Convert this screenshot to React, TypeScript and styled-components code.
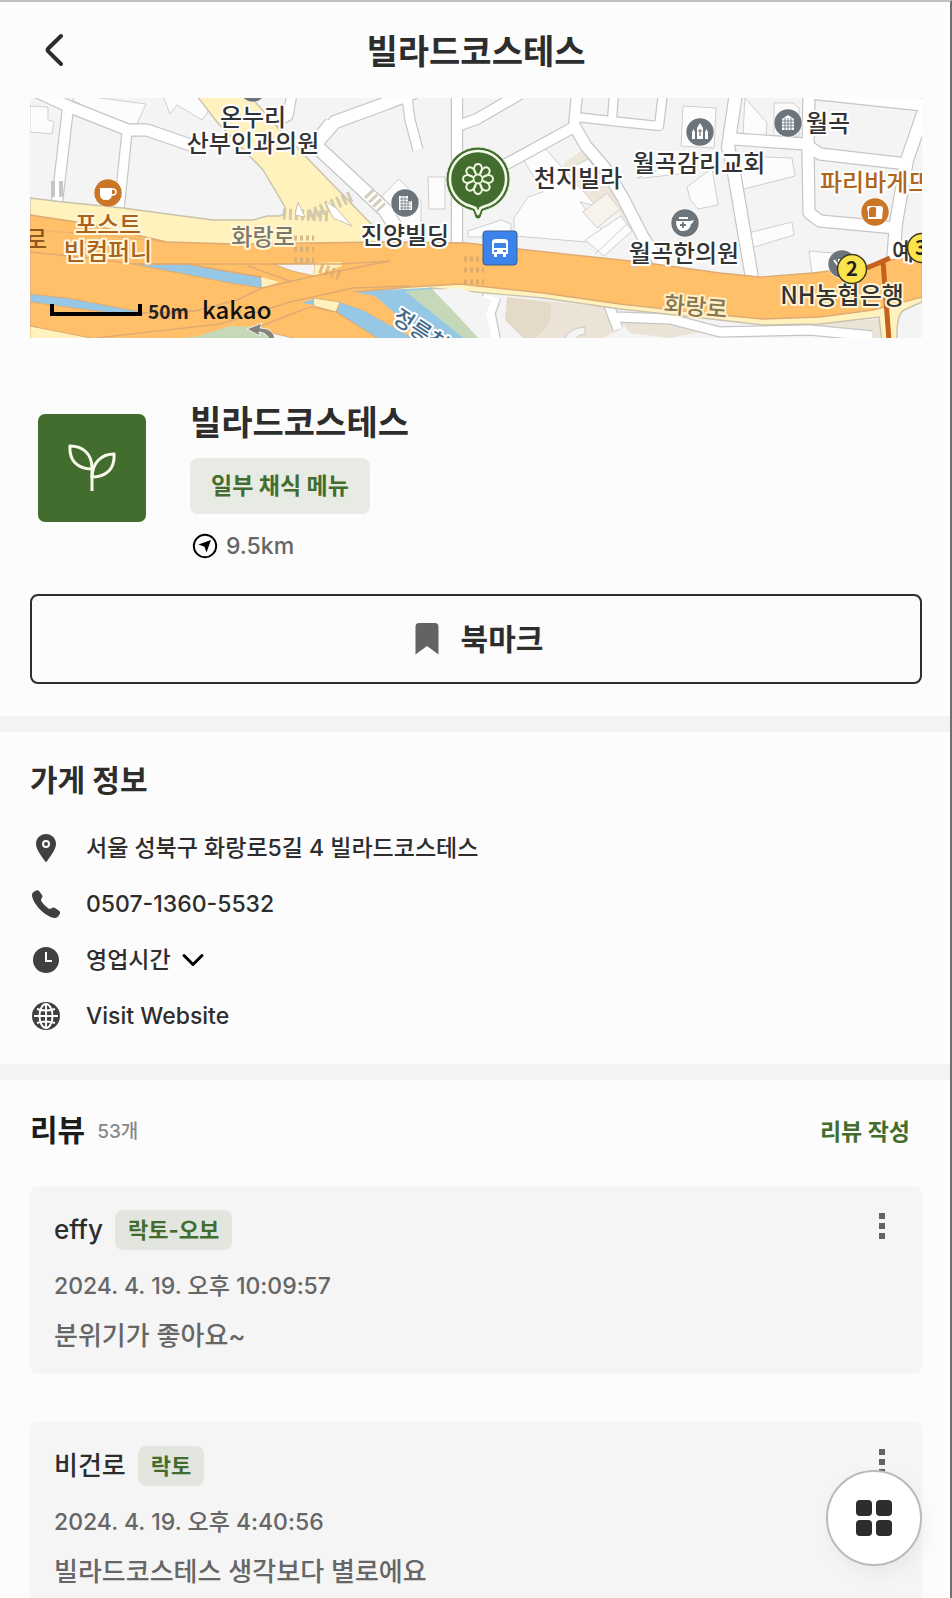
import React from "react";
import styled, { createGlobalStyle } from "styled-components";

const GlobalStyle = createGlobalStyle`
  *, *::before, *::after { box-sizing: border-box; }
  body {
    margin: 0;
    background: #fcfcfc;
    color: #2d2d2d;
    font-family: Inter, "Noto Sans CJK KR", sans-serif;
    font-weight: 500;
  }
  h1, h2, p, ul { margin: 0; padding: 0; }
  button { font: inherit; color: inherit; background: none; border: 0; padding: 0; cursor: pointer; }
  a { color: inherit; text-decoration: none; }
  svg { display: block; }
`;

const Screen = styled.div`
  height: 100vh;
  overflow: hidden auto;
  scrollbar-width: none;
  border-top: 2px solid #c0c0c0;
  border-right: 2px solid #707070;
`;

const TopBar = styled.header`
  display: grid;
  grid-template-columns: 48px 1fr 48px;
  align-items: center;
  height: 96px;
  padding: 0 28px 0 30px;
`;

const BackButton = styled.button`
  display: flex;
  justify-content: center;
  width: 48px;
  height: 48px;
  align-items: center;
`;

const PageTitle = styled.h1`
  padding-top: 4px;
  font-size: 34px;
  line-height: 40px;
  font-weight: 700;
  text-align: center;
`;

const MapFrame = styled.div`
  height: 240px;
  margin: 0 28px 0 30px;
  overflow: hidden;
  background: #f4f4f4;

  > svg { width: 100%; height: 100%; }
`;

const Summary = styled.section`
  padding: 66px 28px 32px 30px;
`;

const SummaryRow = styled.div`
  display: flex;
  gap: 44px;
  padding-left: 8px;
  margin-bottom: 32px;
`;

const StoreBadge = styled.div`
  display: flex;
  align-items: center;
  justify-content: center;
  flex: none;
  width: 108px;
  height: 108px;
  margin-top: 10px;
  border-radius: 7px;
  background: #426d2f;
`;

const SummaryText = styled.div`
  display: flex;
  flex-direction: column;
  align-items: flex-start;
  gap: 16px;
`;

const StoreName = styled.h2`
  font-size: 34px;
  line-height: 38px;
  font-weight: 700;
`;

const Tag = styled.span<{ $large?: boolean }>`
  display: flex;
  align-items: center;
  height: ${(p) => (p.$large ? 56 : 40)}px;
  padding: 0 ${(p) => (p.$large ? 21 : 13)}px;
  border-radius: 8px;
  background: ${(p) => (p.$large ? "#e8ebe4" : "#e2e6de")};
  color: #426d2f;
  font-size: ${(p) => (p.$large ? 23 : 22)}px;
  line-height: 30px;
  font-weight: 700;
`;

const Distance = styled.p`
  display: flex;
  align-items: center;
  gap: 8px;
  padding-left: 2px;
  color: #666;
  font-size: 23px;
  line-height: 32px;
`;

const BookmarkButton = styled.button`
  display: flex;
  align-items: center;
  justify-content: center;
  gap: 22px;
  width: 100%;
  height: 90px;
  padding-left: 6px;
  border: 2px solid #2d2d2d;
  border-radius: 8px;
  font-size: 30px;
  line-height: 40px;
  font-weight: 700;
`;

const Divider = styled.hr`
  height: 16px;
  margin: 0;
  border: 0;
  background: #f3f3f3;
`;

const StoreInfo = styled.section`
  padding: 28px 28px 20px 30px;
`;

const SectionTitle = styled.h2<{ $dark?: boolean }>`
  color: ${(p) => (p.$dark ? "#1c1c1c" : "#2d2d2d")};
  font-size: 30px;
  line-height: 40px;
  font-weight: 700;
`;

const InfoList = styled.ul`
  margin-top: 20px;
  list-style: none;
`;

const InfoItem = styled.li`
  display: flex;
  align-items: center;
  gap: 24px;
  height: 56px;
  padding-left: 2px;
`;

const InfoText = styled.span`
  font-size: 23px;
  line-height: 30px;
`;

const HoursButton = styled.button`
  display: flex;
  align-items: center;
  gap: 10px;
`;

const IconSlot = styled.span`
  flex: none;
  width: 30px;
  display: flex;
`;

const Reviews = styled.section`
  padding: 30px 28px 48px 30px;
`;

const ReviewsHeader = styled.div`
  display: flex;
  align-items: center;
  gap: 12px;
  height: 40px;
  padding-right: 12px;
  margin-bottom: 36px;
`;

const ReviewCount = styled.span`
  flex: 1;
  padding-top: 4px;
  color: #888;
  font-size: 19px;
  line-height: 30px;
`;

const WriteLink = styled.a`
  padding-top: 4px;
  color: #426d2f;
  font-size: 23px;
  line-height: 30px;
  font-weight: 700;
`;

const ReviewList = styled.ul`
  display: flex;
  flex-direction: column;
  gap: 48px;
  list-style: none;
`;

const ReviewCard = styled.li`
  display: flex;
  flex-direction: column;
  gap: 20px;
  padding: 24px;
  border-radius: 8px;
  background: #f5f5f5;
`;

const ReviewHead = styled.div`
  display: flex;
  align-items: center;
  gap: 12px;
  height: 40px;
`;

const Author = styled.span`
  font-size: 26px;
  line-height: 40px;
`;

const MoreButton = styled.button`
  display: flex;
  flex-direction: column;
  align-items: center;
  align-self: flex-start;
  justify-content: center;
  gap: 4px;
  width: 32px;
  height: 32px;
  margin-left: auto;
`;

const Dot = styled.i`
  width: 6px;
  height: 6px;
  background: #636363;
`;

const ReviewDate = styled.p`
  color: #666;
  font-size: 23px;
  line-height: 32px;
`;

const ReviewBody = styled.p`
  color: #666;
  font-size: 26px;
  line-height: 28px;
`;

const FloatingMenu = styled.button`
  position: fixed;
  right: 30px;
  bottom: 32px;
  display: grid;
  grid-template-columns: 16px 16px;
  place-content: center;
  gap: 4px;
  width: 96px;
  height: 96px;
  border: 2px solid #bababa;
  border-radius: 50%;
  background: #fff;
  box-shadow: 4px 8px 20px rgba(0, 0, 0, 0.05);
`;

const Tile = styled.i`
  height: 16px;
  border-radius: 4px;
  background: #2d2d2d;
`;

const streets: [string, number][] = [
  ["M3-8L40 9L98 32L117 32L175 52", 11],
  ["M38 10L27 104", 10],
  ["M97 34L89 112", 9],
  ["M262-4L258 18L240 26M300 24L284 44", 9],
  ["M284 48L305 24L357 5L385-6", 12],
  ["M377 0L380 22L388 52", 9],
  ["M284 46L355 112L374 142", 13],
  ["M427-5L427 150", 10],
  ["M430 27L447 21L490-4", 10],
  ["M430 90L480 64L544 29L547-5", 10],
  ["M546 19L590 24L629 28L633-5", 8],
  ["M584-5L582 22", 8],
  ["M545 29L556 48L575 70L593 100L613 139L632 168", 11],
  ["M706-5L698 49L703 69L722 180", 12],
  ["M704 41L775 46L790 56L877 66", 11],
  ["M779-5L778 50L779 115L790 123L866 130", 11],
  ["M775-6L896 7L877 62L866 125L863 165", 12],
  ["M462 198L456 215L462 245", 17],
  ["M578 205L588 231M586 219L640 221L690 234L780 232L842 238", 9],
];

const buildings = [
  "M0 8L18 9L18 22L24 24L22 36L0 34Z",
  "M42 2L48-3L116 6L106 28L66 14Z",
  "M133-2L140 16L147 7L172 22L182 8L176-4Z",
  "M398 79H415V111H399Z",
  "M352 98L369 81L391 103V139L374 139Z",
  "M493 61L515 50L566 108L550 104L572 132L556 144L484 138V120L498 99L513 94Z",
  "M438 133L471 122L481 126V139H438Z",
  "M653 8L686 10L684 50L651 48Z",
  "M715 0L737 25L736 38L713 36Z",
  "M744 5H763L769 10V38H744Z",
  "M706 58L762 60L765 78L710 92Z",
  "M657 89L682 70L688 107L668 111L660 101Z",
  "M718 135L762 124L764 137L721 150Z",
  "M779 153L815 156L815 177L782 175Z",
  "M607 80L648 64L650 76L613 80Z",
];

type LabelProps = {
  x: number;
  y: number;
  children: React.ReactNode;
  color?: string;
  halo?: string;
  start?: boolean;
  rotate?: number;
  size?: number;
};

const MapText = styled.text`
  font-family: "Noto Sans CJK KR", sans-serif;
  font-weight: 500;
  paint-order: stroke;
  stroke-width: 4px;
  stroke-linejoin: round;
`;

const Label = ({ x, y, children, color = "#333", halo = "#fff", start, rotate = 0, size = 24 }: LabelProps) => (
  <MapText
    x={x}
    y={y}
    fontSize={size}
    fill={color}
    stroke={halo}
    textAnchor={start ? "start" : "middle"}
    transform={rotate ? `rotate(${rotate} ${x} ${y})` : undefined}
  >
    {children}
  </MapText>
);

const Poi = ({ x, y, color = "#6c757b", children }: { x: number; y: number; color?: string; children?: React.ReactNode }) => (
  <g transform={`translate(${x} ${y})`}>
    <circle r="14.5" fill="#fff" opacity="0.7" />
    <circle r="13.7" fill={color} />
    {children}
  </g>
);

const Tower = () => (
  <>
    <path d="M-6-7H3V-2H7V7H-6Z" fill="#fff" />
    <path d="M-5-4H3M-5-1H6M-5 2H6M-5 5H6M-3-7V7M0-7V7M3-2V7" stroke="#6c757b" strokeWidth="0.8" />
  </>
);

const StoreMap = () => (
  <svg viewBox="0 0 892 240" preserveAspectRatio="xMidYMid slice" role="img" aria-label="빌라드코스테스 지도">
    <rect width="892" height="240" fill="#f4f4f4" />

    <path d="M533 66L551 53L566 68L612 120L600 130L577 95L564 106Z" fill="#efe6da" />
    <g fill="#fcfcfc" stroke="#cfcfd1" strokeWidth="1">
      {buildings.map((d) => (
        <path key={d} d={d} />
      ))}
      <path d="M545 68L558 61L570 76L556 86Z" />
      <path d="M553 114L577 95L590 111L567 130Z" fill="#f8f3ea" />
      <path d="M555 142L591 118L602 133L574 158ZM565 156L597 126" />
    </g>
    <path d="M477 199L577 209L590 232L573 240H493L475 222Z" fill="#ece3d7" />
    <path d="M520 205L477 199L475 222L493 240H505Q525 225 520 205Z" fill="#e5d9c8" />
    <path d="M534 242Q538 230 555 229V236Q546 237 546 242Z" fill="#f4f4f4" stroke="#c6c6c8" />
    <path d="M590 222L640 225L670 234L640 240L600 235ZM765 226L850 221V240H800Z" fill="#ece3d7" />

    <g fill="none" strokeLinejoin="round">
      {streets.map(([d, w]) => (
        <path key={d} d={d} stroke="#c6c6c9" strokeWidth={w + 2.4} />
      ))}
      {streets.map(([d, w]) => (
        <path key={d} d={d} stroke="#fff" strokeWidth={w} />
      ))}
    </g>

    <path
      d="M167-2L187 24L233 72L255 109Q256 118 248 118L237 118L223 122H183L130 115L93 110L33 104L0 100V240H70L310 205L400 190L513 200L590 211L690 222L733 227L790 226L849 219L852 245H867Q866 216 874 212L892 204V185L733 200L352 170V144L347 132L248 30L220-2Z"
      fill="#fff2bd"
      stroke="#c9c3ae"
      strokeWidth="1.4"
    />

    <path d="M323 193L400 190L446 242H395L366 218Z" fill="#96c8e6" />
    <path d="M375 193L403 191L450 242H436Z" fill="#c5d8b8" />
    <path d="M403 192L430 190L462 202L456 215L462 240H450Z" fill="#f4f4f4" />
    <path
      d="M0 117L53 125L137 144L203 146L352 144L437 145L497 152L610 164L690 175L730 179L783 175L830 169L892 155V199L843 212L790 219L733 221L690 217L590 206L513 195L430 186L380 189L323 194L395 242H350L280 209L225 230L240 242H60L0 228Z"
      fill="#ffc069"
      stroke="#dfab72"
      strokeWidth="1.4"
    />
    <path d="M103 166L157 166L231 179L232 190L200 185Z" fill="#96c8e6" stroke="#dfab72" />
    <path d="M0 196L37 200L117 215L103 218L0 204Z" fill="#96c8e6" stroke="#dfab72" />
    <path d="M310 204L333 212L387 242H350L306 214Z" fill="#96c8e6" stroke="#dfab72" />
    <path d="M323 194L345 198L395 242H387L333 212L310 204Z" fill="#ffc069" />
    <path d="M280 209L306 214L350 242H272L225 231Z" fill="#ffc069" stroke="#dfab72" />
    <path d="M283 200L310 204L306 214L284 208Z" fill="#fff2bd" stroke="#dfab72" />
    <path d="M272 205L283 201L284 207Z" fill="#96c8e6" />
    <path d="M231 179L249 184L232 190Z" fill="#fff2bd" />
    <path d="M243 166L285 165L284 178L262 173Z" fill="#f4f4f4" stroke="#dfab72" />
    <path d="M285 165L311 164L312 168L284 178Z" fill="#fff2bd" />
    <path d="M130 241L165 239L200 228L228 229L240 241Z" fill="#c5d8b8" />
    <path d="M0 228L66 241H0Z" fill="#fff2bd" stroke="#dfab72" />
    <g fill="none" stroke="#dfab72" strokeWidth="1.4">
      <path d="M0 154L60 160L103 166H243L310 166L360 163" />
      <path d="M0 132L60 136L137 144" opacity="0.5" />
      <path d="M122 215L165 213L207 202L232 190L284 178L360 163" />
      <path d="M66 240L190 226L260 204L323 190L380 188" />
      <path d="M117 215L138 216L170 212M218 168L262 184" />
      <path d="M232 179L207 175L157 166" />
    </g>

    <g stroke="#c9c1a9" strokeWidth="5" strokeDasharray="3 3" opacity="0.8">
      <path d="M253 116L300 118M280 117L322 98M338 95L352 110" strokeWidth="11" />
      <path d="M264 140H284M264 151H284M264 162H284" stroke="#cfae7e" />
      <path d="M434 161H454M434 172H454M434 184H454" stroke="#d7a76c" />
      <path d="M290 170L312 178" stroke="#dfab72" strokeWidth="10" />
    </g>
    <path d="M268 104L275 119L265 117ZM295 103L306 110L322 128L303 120Z" fill="#fff" stroke="#c9c3ae" />
    <path d="M23 83V99M31 83V99M604 170V162" stroke="#c6c6c9" strokeWidth="4" />
    <path d="M837 170L860 160M853 163L859 242" stroke="#c5601d" strokeWidth="5" fill="none" />

    <Poi x={223} y={-10} />
    <Poi x={78} y={95} color="#ca7626">
      <path d="M-8-5H4V1Q4 7-2 7Q-8 7-8 1Z" fill="#fff" />
      <circle cx="5" cy="-1" r="3" fill="none" stroke="#fff" strokeWidth="1.5" />
    </Poi>
    <Poi x={375} y={105}>
      <Tower />
    </Poi>
    <Poi x={670} y={34}>
      <path d="M-3 7V-4L0-9L3-4V7ZM-8 7V0L-6.5-3L-5 0V7ZM5 7V0L6.5-3L8 0V7Z" fill="#fff" />
      <path d="M0-3V4M-2-1H2" stroke="#6c757b" strokeWidth="1.2" />
    </Poi>
    <Poi x={758} y={25}>
      <path d="M-6 7V-4L0-8L6-4V7Z" fill="#fff" />
      <path d="M-6-2H6M-6 1H6M-6 4H6M-3-5V7M0-5V7M3-5V7" stroke="#6c757b" strokeWidth="0.9" />
    </Poi>
    <Poi x={845} y={114} color="#ca7626">
      <path d="M-7-6H5Q8-6 8-3L7 7H-7V0Q-9-4-7-6Z" fill="#fff" />
      <path d="M-6-3Q-5-5-3-5H0Q2-4 1 0V5H-6Z" fill="#ca7626" />
    </Poi>
    <Poi x={655} y={125}>
      <path d="M-9-2H5L9-3Q8 0 6 1Q5 7-1 8H-4Q-9 6-9-2ZM-6-6H3V-4H-6Z" fill="#fff" />
      <path d="M-2-1V5M-5 2H1" stroke="#6c757b" strokeWidth="1.8" />
    </Poi>
    <Poi x={812} y={166}>
      <path d="M-8-4L-3 3V-5" stroke="#fff" strokeWidth="2" fill="none" />
    </Poi>

    <Label x={223} y={28}>온누리</Label>
    <Label x={223} y={54}>산부인과의원</Label>
    <Label x={78} y={135} color="#aa631d" halo="#fff7dc">포스트</Label>
    <Label x={78} y={162} color="#aa631d" halo="#fff7dc">빈컴퍼니</Label>
    <Label x={6} y={150} color="#8f5720" halo="#ffc069">로</Label>
    <Label x={233} y={147} color="#7d796e" halo="#fff7d6" size={23}>화랑로</Label>
    <Label x={375} y={146}>진양빌딩</Label>
    <Label x={548} y={89}>천지빌라</Label>
    <Label x={669} y={74}>월곡감리교회</Label>
    <Label x={776} y={34} start>월곡</Label>
    <Label x={790} y={93} color="#b0661c" start>파리바게뜨</Label>
    <Label x={654} y={164}>월곡한의원</Label>
    <Label x={862} y={162} start>예</Label>
    <Label x={812} y={206} halo="#fff4d5">NH농협은행</Label>
    <Label x={665} y={217} color="#857650" halo="#fff0c8" size={23} rotate={5}>화랑로</Label>
    <Label x={361} y={223} color="#41698a" size={22} rotate={33} start>정릉천</Label>

    <g stroke="#3f3a1c" strokeWidth="1.5" fill="#fbe34d">
      <circle cx="822" cy="171" r="14.5" />
      <circle cx="892" cy="150" r="14.5" />
    </g>
    <g fontFamily="Noto Sans CJK KR" fontSize="20" fontWeight="700" fill="#222" textAnchor="middle">
      <text x="822" y="178">2</text>
      <text x="891" y="157">3</text>
    </g>

    <g>
      <path d="M448 49a32 32 0 0 1 10 62.400l-5 1.600-2 6q-3 4-6 0l-2-6-5-1.600a32 32 0 0 1 10-62.400z" fill="#426d2f" stroke="#e8f2df" strokeWidth="1" />
      <path d="M448 53a28 28 0 0 1 7.500 55l-5 2-2.500 6-2.500-6-5-2a28 28 0 0 1 7.500-55z" fill="none" stroke="#f3f8e8" strokeWidth="2.600" strokeLinejoin="round" />
      <g fill="none" stroke="#eff7df" strokeWidth="1.900" transform="translate(448 81)">
        {[0, 45, 90, 135, 180, 225, 270, 315].map((a) => (
          <path key={a} d="M-2-5C-6-11-3-15 0-15S6-11 2-5" transform={`rotate(${a})`} />
        ))}
        <circle r="4.500" />
      </g>
    </g>

    <g>
      <rect x="453" y="133" width="34" height="34" rx="3" fill="#3b82ea" stroke="#3a6190" />
      <path d="M462 144Q462 141 466 141H474Q478 141 478 144V156H476V159H473V156H467V159H464V156H462Z" fill="#fff" />
      <path d="M464 145H476V150H464ZM464 152H467V154H464ZM473 152H476V154H473Z" fill="#3b82ea" />
    </g>

    <path d="M22 206V216H110V206" fill="none" stroke="#000" strokeWidth="4" />
    <g fontFamily="Noto Sans CJK KR">
      <text x="118" y="221" fontSize="19" fontWeight="700" fill="#222">50m</text>
      <text x="172" y="221" fontSize="24" fontWeight="500" fill="#111">kakao</text>
    </g>
    <path d="M217 231L232 225L230 230Q244 230 245 242H239Q238 235 229 234L230 238Z" fill="#85827c" stroke="#fff" strokeWidth="0.8" />
  </svg>
);

const ink = "#404040";

const PinIcon = () => (
  <svg width="28" height="28" viewBox="0 0 28 28" aria-hidden="true">
    <path d="M14 0C8.400 0 4 4.300 4 9.800C4 16 11 24 13 27.300Q14 28.500 15 27.300C17 24 24 16 24 9.800C24 4.300 19.600 0 14 0Z" fill={ink} />
    <circle cx="14" cy="10" r="3" fill="none" stroke="#fcfcfc" strokeWidth="2" />
  </svg>
);

const PhoneIcon = () => (
  <svg width="28" height="28" viewBox="0 0 28 28" aria-hidden="true">
    <path d="M1.500 2L4 .5Q6-.5 7.500 1.500L10 5Q11 7 9.500 8.500Q8.500 10 9.500 11.500Q12 15.500 16.500 18.500Q18 19.500 19.500 18.300Q21.500 17 23 18L27 20.800Q28.700 22 27.800 24L26 26.500Q24.500 28.300 22 28Q15 26.500 8.500 20Q1.500 13 0 6Q-.3 3.500 1.500 2Z" fill={ink} />
  </svg>
);

const ClockIcon = () => (
  <svg width="28" height="28" viewBox="0 0 28 28" aria-hidden="true">
    <circle cx="14" cy="14" r="13" fill={ink} />
    <path d="M14 6V15H20" fill="none" stroke="#fcfcfc" strokeWidth="2" />
  </svg>
);

const GlobeIcon = () => (
  <svg width="28" height="28" viewBox="0 0 28 28" aria-hidden="true">
    <circle cx="14" cy="14" r="14" fill={ink} />
    <g fill="none" stroke="#fcfcfc" strokeWidth="1.9">
      <path d="M2 14H26M14 2V26M5 7Q14 10 23 7M5 21Q14 18 23 21" />
      <ellipse cx="14" cy="14" rx="6.500" ry="12" />
    </g>
  </svg>
);

const reviews = [
  { author: "effy", diet: "락토-오보", date: "2024. 4. 19. 오후 10:09:57", body: "분위기가 좋아요~" },
  { author: "비건로", diet: "락토", date: "2024. 4. 19. 오후 4:40:56", body: "빌라드코스테스 생각보다 별로에요" },
];

export default function App() {
  return (
    <Screen>
      <GlobalStyle />
      <TopBar>
        <BackButton type="button" aria-label="뒤로">
          <svg width="20" height="34" viewBox="0 0 20 34" fill="none">
            <path d="M17 3L4.500 15.300Q2.800 17 4.500 18.700L17 31" stroke="#2d2d2d" strokeWidth="4" strokeLinecap="round" />
          </svg>
        </BackButton>
        <PageTitle>빌라드코스테스</PageTitle>
      </TopBar>

      <main>
        <MapFrame>
          <StoreMap />
        </MapFrame>

        <Summary>
          <SummaryRow>
            <StoreBadge>
              <svg width="48" height="48" viewBox="0 0 48 48" fill="none" stroke="#f8fbe9" strokeWidth="3" aria-hidden="true">
                <path d="M24 47V24C24 10 15 2 2 2C1 16 9 25 24 25" />
                <path d="M24 34C24 18 34 10 46 10C47 24 39 33 24 33" />
              </svg>
            </StoreBadge>
            <SummaryText>
              <StoreName>빌라드코스테스</StoreName>
              <Tag $large>일부 채식 메뉴</Tag>
              <Distance>
                <svg width="26" height="26" viewBox="0 0 26 26" aria-hidden="true">
                  <circle cx="13" cy="13" r="11.200" fill="none" stroke="#000" strokeWidth="1.900" />
                  <path d="M19 7L14.500 19.500L12.500 13.800L6.500 11.500Z" fill="#000" />
                </svg>
                9.5km
              </Distance>
            </SummaryText>
          </SummaryRow>
          <BookmarkButton type="button">
            <svg width="24" height="32" viewBox="0 0 24 32" aria-hidden="true">
              <path d="M4 0H20Q23.500 0 23.500 4V31.500L12 23L.5 31.500V4Q.5 0 4 0Z" fill="#636363" />
            </svg>
            북마크
          </BookmarkButton>
        </Summary>

        <Divider />

        <StoreInfo>
          <SectionTitle>가게 정보</SectionTitle>
          <InfoList>
            <InfoItem>
              <IconSlot><PinIcon /></IconSlot>
              <InfoText>서울 성북구 화랑로5길 4 빌라드코스테스</InfoText>
            </InfoItem>
            <InfoItem>
              <IconSlot><PhoneIcon /></IconSlot>
              <InfoText as="a" href="tel:0507-1360-5532">0507-1360-5532</InfoText>
            </InfoItem>
            <InfoItem>
              <IconSlot><ClockIcon /></IconSlot>
              <HoursButton type="button" aria-expanded="false">
                <InfoText>영업시간</InfoText>
                <svg width="24" height="16" viewBox="0 0 24 16" fill="none" aria-hidden="true">
                  <path d="M3 3.500L12 12.500L21 3.500" stroke="#000" strokeWidth="3" strokeLinecap="round" strokeLinejoin="round" />
                </svg>
              </HoursButton>
            </InfoItem>
            <InfoItem>
              <IconSlot><GlobeIcon /></IconSlot>
              <InfoText as="a" href="#website">Visit Website</InfoText>
            </InfoItem>
          </InfoList>
        </StoreInfo>

        <Divider />

        <Reviews>
          <ReviewsHeader>
            <SectionTitle $dark>리뷰</SectionTitle>
            <ReviewCount>53개</ReviewCount>
            <WriteLink href="#write">리뷰 작성</WriteLink>
          </ReviewsHeader>
          <ReviewList>
            {reviews.map((r) => (
              <ReviewCard key={r.date}>
                <ReviewHead>
                  <Author>{r.author}</Author>
                  <Tag>{r.diet}</Tag>
                  <MoreButton type="button" aria-label="더보기">
                    <Dot />
                    <Dot />
                    <Dot />
                  </MoreButton>
                </ReviewHead>
                <ReviewDate>{r.date}</ReviewDate>
                <ReviewBody>{r.body}</ReviewBody>
              </ReviewCard>
            ))}
          </ReviewList>
        </Reviews>
      </main>

      <FloatingMenu type="button" aria-label="메뉴">
        <Tile />
        <Tile />
        <Tile />
        <Tile />
      </FloatingMenu>
    </Screen>
  );
}
